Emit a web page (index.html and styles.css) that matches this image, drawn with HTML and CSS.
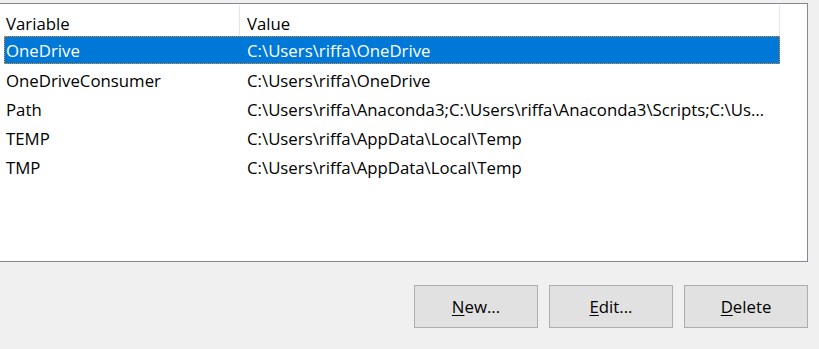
FILE: index.html
```html
<!DOCTYPE html>
<html lang="en">
<head>
    <meta charset="UTF-8">
    <title>Environment Variables</title>
    <link rel="stylesheet" href="styles.css">
</head>
<body>

<div class="dialog">
    <div class="list-box">
        <div class="list-header">
            <div class="col col-name">Variable</div>
            <div class="col col-value">Value</div>
        </div>
        <div class="list-rows">
            <div class="row selected">
                <div class="col col-name">OneDrive</div>
                <div class="col col-value">C:\Users\riffa\OneDrive</div>
            </div>
            <div class="row">
                <div class="col col-name">OneDriveConsumer</div>
                <div class="col col-value">C:\Users\riffa\OneDrive</div>
            </div>
            <div class="row">
                <div class="col col-name">Path</div>
                <div class="col col-value">C:\Users\riffa\Anaconda3;C:\Users\riffa\Anaconda3\Scripts;C:\Users\riffa\AppData\Local\Microsoft\WindowsApps</div>
            </div>
            <div class="row">
                <div class="col col-name">TEMP</div>
                <div class="col col-value">C:\Users\riffa\AppData\Local\Temp</div>
            </div>
            <div class="row">
                <div class="col col-name">TMP</div>
                <div class="col col-value">C:\Users\riffa\AppData\Local\Temp</div>
            </div>
        </div>
    </div>

    <div class="actions">
        <button class="btn"><u>N</u>ew...</button>
        <button class="btn"><u>E</u>dit...</button>
        <button class="btn"><u>D</u>elete</button>
    </div>
</div>

</body>
</html>
```

FILE: styles.css
```css
* {
    box-sizing: border-box;
    margin: 0;
    padding: 0;
}

body {
    background-color: #f0f0f0;
    font-family: "Open Sans", "Liberation Sans", sans-serif;
    font-size: 16.8px;
    color: #000;
    width: 819px;
    height: 349px;
    overflow: hidden;
}

.dialog {
    width: 808px;
    padding-top: 3px;
}

/* List view */
.list-box {
    background: #fff;
    border: 1px solid #828790;
    border-left: none;
    height: 259px;
    padding: 0 0 0 4px;
}

.list-header {
    display: flex;
    height: 32px;
    width: 776px;
}

.list-header .col {
    padding-top: 7px;
    border-right: 1px solid #e5e5e5;
    margin-top: 1px;
}

.col-name {
    width: 236px;
    padding-left: 2px;
    flex-shrink: 0;
}

.col-value {
    flex: 1;
    padding-left: 7px;
    padding-right: 9px;
    white-space: nowrap;
    overflow: hidden;
    text-overflow: ellipsis;
}

.row {
    display: flex;
    align-items: center;
    height: 29px;
    width: 776px;
    padding-top: 1px;
}

.row.selected {
    background-color: #0078d7;
    color: #fff;
    height: 28px;
    outline: 1px dotted #f08a1c;
    outline-offset: -1px;
    margin-bottom: 1px;
}

/* Buttons */
.actions {
    display: flex;
    justify-content: flex-end;
    gap: 11px;
    margin-top: 23px;
}

.btn {
    width: 124px;
    height: 43px;
    background-color: #e1e1e1;
    border: 1px solid #adadad;
    font-family: inherit;
    font-size: 16.8px;
    color: #000;
    padding-bottom: 1px;
}

.btn u {
    text-decoration-thickness: 1px;
    text-underline-offset: 2px;
}
```
